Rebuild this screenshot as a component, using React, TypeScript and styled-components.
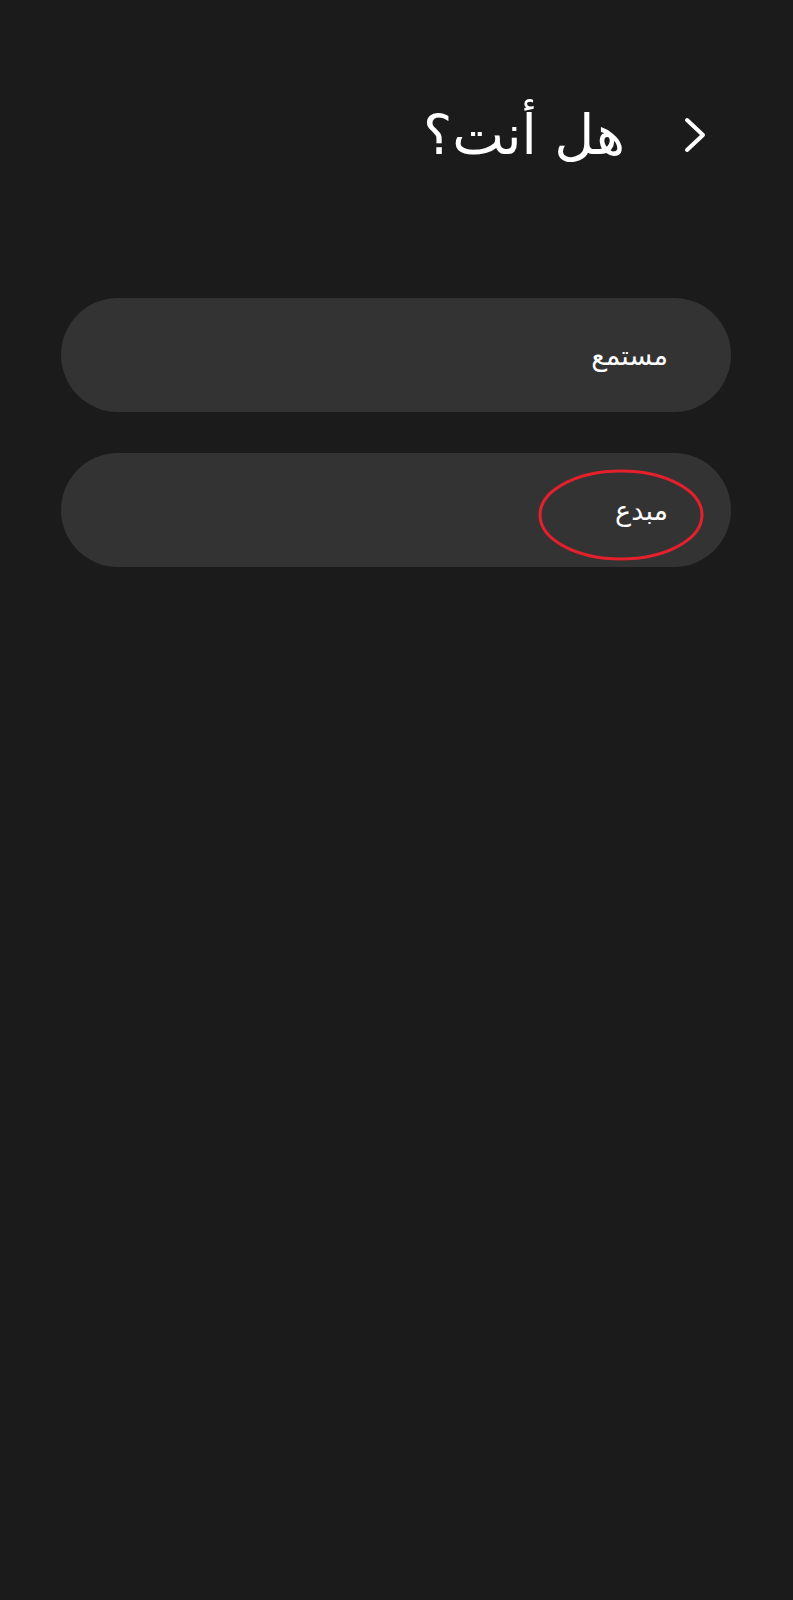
import React from "react";
import styled, { createGlobalStyle } from "styled-components";

const Global = createGlobalStyle`
  html, body { margin: 0; padding: 0; background: #1b1b1b; }
  body { font-family: "DejaVu Sans", "Noto Sans", sans-serif; }
`;

const Page = styled.div`
  direction: rtl;
  min-height: 1600px;
  background: #1b1b1b;
  color: #ffffff;
  display: flex;
  flex-direction: column;
`;

const Header = styled.header`
  display: flex;
  align-items: center;
  gap: 58px;
  padding: 102px 86px 0 0;
  height: 66px;
`;

const BackButton = styled.button`
  background: none;
  border: none;
  padding: 0;
  width: 24px;
  height: 38px;
  display: flex;
  align-items: center;
  justify-content: center;
  color: #fff;
`;

const Title = styled.h1`
  margin: 0;
  font-size: 55px;
  font-weight: 400;
  line-height: 1;
  color: #ffffff;
`;

const Options = styled.div`
  display: flex;
  flex-direction: column;
  gap: 41px;
  margin: 130px 62px 0 61px;
`;

const Option = styled.button`
  position: relative;
  height: 114px;
  border-radius: 57px;
  background: #333333;
  border: none;
  display: flex;
  align-items: center;
  padding: 0 63px 0 0;
  color: #ffffff;
  font-family: "DejaVu Sans", sans-serif;
  font-size: 27px;
  direction: rtl;
`;

const Highlight = styled.svg`
  position: absolute;
  right: 26px;
  top: 15px;
  pointer-events: none;
`;

export default function App() {
  return (
    <>
      <Global />
      <Page>
        <Header>
          <BackButton aria-label="back">
            <svg width="24" height="38" viewBox="0 0 24 38" fill="none">
              <path d="M4 4 L20 19 L4 34" stroke="#fff" strokeWidth="4" strokeLinecap="round" strokeLinejoin="round" />
            </svg>
          </BackButton>
          <Title>هل أنت؟</Title>
        </Header>
        <Options>
          <Option>مستمع</Option>
          <Option>
            مبدع
            <Highlight width="168" height="94" viewBox="0 0 168 94">
              <ellipse cx="84" cy="47" rx="81" ry="44" stroke="#e3202b" strokeWidth="3" fill="none" />
            </Highlight>
          </Option>
        </Options>
      </Page>
    </>
  );
}
